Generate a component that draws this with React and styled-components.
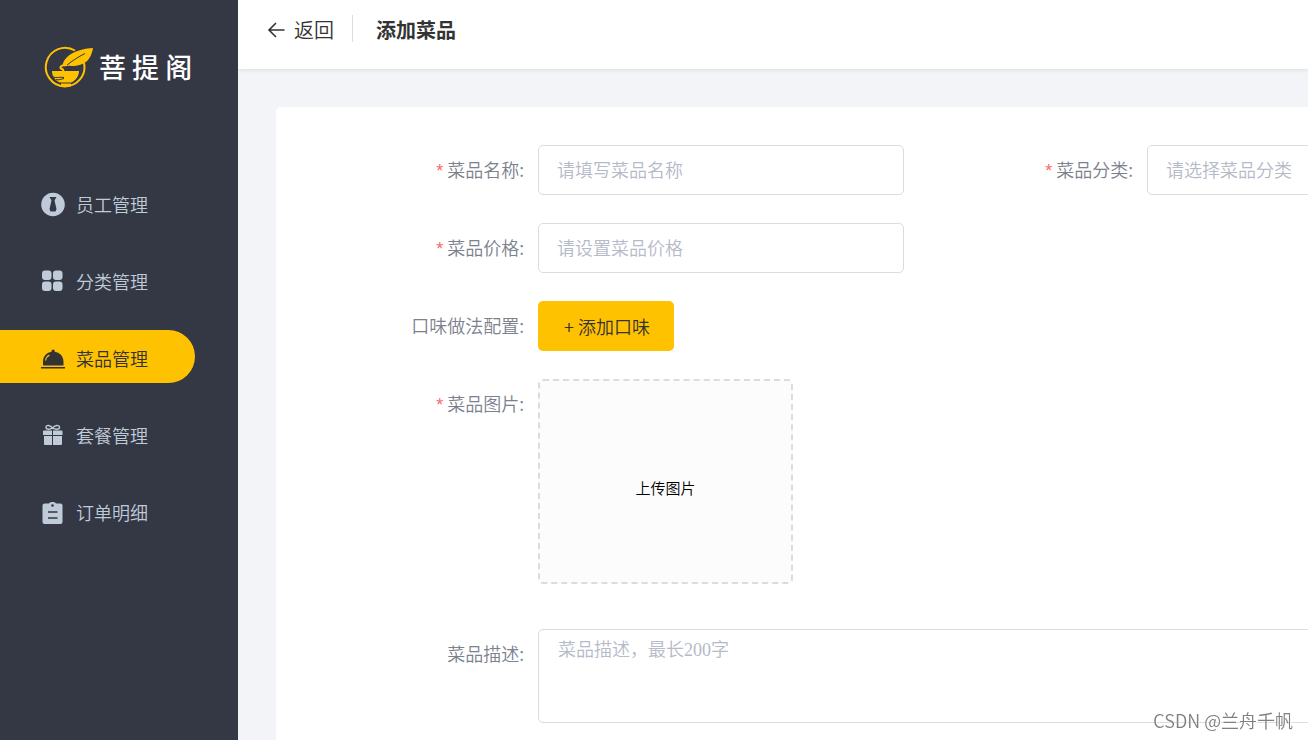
import React, { useState } from "react";
import styled, { createGlobalStyle } from "styled-components";

const GlobalStyle = createGlobalStyle`
  * {
    box-sizing: border-box;
  }

  body {
    margin: 0;
    overflow: hidden;
    background-color: #f3f4f7;
    font-family: "Noto Sans CJK SC", sans-serif;
    font-weight: 350;
  }

  button, input, select {
    font-family: inherit;
    font-weight: inherit;
  }
`;

const Layout = styled.div`
  display: flex;
  height: 100vh;
`;

// Sidebar
const Sidebar = styled.aside`
  flex: none;
  width: 238px;
  background-color: #343744;
`;

const Logo = styled.div`
  display: flex;
  align-items: center;
  gap: 5px;
  height: 42px;
  margin: 46px 0 88px 44px;
  color: #fff;
  font-size: 27px;
  font-weight: 500;
  line-height: 38px;
  white-space: nowrap;
`;

const Menu = styled.nav`
  display: flex;
  flex-direction: column;
  gap: 24px;
  padding-right: 43px;
`;

const MenuItem = styled.a`
  display: flex;
  align-items: center;
  gap: 11px;
  height: 53px;
  padding: 3px 0 0 40px;
  border-radius: 0 27px 27px 0;
  background-color: ${({ $active }) => ($active ? "#ffc200" : "transparent")};
  color: ${({ $active }) => ($active ? "#333" : "#bfcbd9")};
  font-size: 18px;
  line-height: 24px;
  text-decoration: none;
`;

// Header
const Main = styled.main`
  flex: 1;
  min-width: 0;
  overflow: hidden;
`;

const Header = styled.header`
  display: flex;
  align-items: center;
  height: 69px;
  padding: 15px 29px 27px;
  background-color: #fff;
  box-shadow: 0 1px 4px rgba(0, 21, 41, 0.1);
  color: #333;
  font-size: 20px;
`;

const BackButton = styled.button`
  display: flex;
  align-items: center;
  gap: 8px;
  height: 27px;
  padding: 2px 18px 0 0;
  border: none;
  border-right: 1px solid #d8dde3;
  background: none;
  color: #333;
  font-size: 20px;
  cursor: pointer;
`;

const Title = styled.h1`
  margin: 0 0 0 23px;
  padding-top: 2px;
  font-size: 20px;
  line-height: 27px;
  font-weight: 700;
`;

// Form
const Card = styled.section`
  min-width: 1275px;
  min-height: 100vh;
  margin: 38px;
  padding: 38px 38px 38px 37px;
  border-radius: 5px;
  background-color: #fff;
`;

const Form = styled.form`
  display: flex;
  flex-direction: column;
  gap: 28px;
`;

const Row = styled.div`
  display: flex;
  gap: 18px;
  padding-bottom: ${({ $last }) => ($last ? "17px" : "0")};
`;

const Field = styled.div`
  display: flex;
  flex: ${({ $wide }) => ($wide ? "1" : "none")};
`;

const Label = styled.label`
  width: 225px;
  padding-right: 14px;
  color: #7c818e;
  font-size: 18px;
  line-height: 48px;
  text-align: right;
`;

const Required = styled.span`
  margin-right: 4px;
  color: #f56c6c;
  font-family: "Liberation Sans", sans-serif;
  font-size: 18px;
`;

const Input = styled.input`
  width: 366px;
  height: 50px;
  padding: 0 19px 2px 18px;
  border: 1px solid #d8dde3;
  border-radius: 5px;
  background-color: #fff;
  color: #606266;
  font-size: 18px;
  outline: none;

  &::placeholder {
    color: #b4bac8;
  }
`;

const Select = styled.select`
  appearance: none;
  width: 366px;
  height: 50px;
  padding: 0 19px 2px 18px;
  border: 1px solid #d8dde3;
  border-radius: 5px;
  background-color: #fff;
  color: #b4bac8;
  font-size: 18px;
  outline: none;
`;

const AddButton = styled.button`
  height: 50px;
  padding: 0 24px 0 26px;
  border: none;
  border-radius: 5px;
  background-color: #ffc200;
  color: #333;
  font-size: 18px;
  cursor: pointer;
`;

const UploadButton = styled.button`
  width: 255px;
  height: 205px;
  padding: 12px 0 0;
  border: 2px dashed #d9dde2;
  border-radius: 5px;
  background-color: #fcfcfc;
  color: #000;
  font-size: 15px;
  cursor: pointer;
`;

const TextArea = styled.textarea`
  flex: 1;
  height: 94px;
  padding: 7px 19px;
  border: 1px solid #d8dde3;
  border-radius: 5px;
  color: #606266;
  font-family: "Liberation Serif", "Noto Sans CJK SC", serif;
  font-size: 18px;
  font-weight: 350;
  line-height: 26px;
  resize: none;
  outline: none;

  &::placeholder {
    color: #b4bac8;
  }
`;

const Watermark = styled.div`
  position: fixed;
  right: 15px;
  bottom: 8px;
  color: #808080;
  font-size: 18px;
  line-height: 24px;
  text-shadow: 1px 1px 0 #fff;
`;

const LogoIcon = () => (
  <svg width="50" height="42" viewBox="0 0 50 42" fill="none">
    <path d="M31 4.500A19.300 19.300 0 1 0 40 17" stroke="#ffc200" strokeWidth="2" />
    <path d="M49 2C47 13 42 20 27 20C24 19.500 22 20.500 18.500 20C20 9 33 3 49 2Z" fill="#ffc200" />
    <path d="M41 7.500C34 11 28 15 23 19" stroke="#343744" strokeWidth="1" />
    <path d="M23 19C16 19 15 22 18 23Q20 24 19 25.500" stroke="#ffc200" strokeWidth="2" />
    <path d="M8 25H35C35 30 32 34 27 37H17C12 35 8 31 8 25Z" fill="#ffc200" />
    <path d="M9 31C13 32.500 16 30.500 20 31.500M12 33.500C15 34.500 17 33 20 32.500" stroke="#343744" strokeWidth="1" />
    <path d="M16 37H28" stroke="#343744" strokeWidth="1" />
    <path d="M17 39H27" stroke="#ffc200" strokeWidth="3" />
  </svg>
);

const StaffIcon = () => (
  <svg width="25" height="25" viewBox="0 0 25 25">
    <circle cx="13" cy="12.500" r="11.800" fill="currentColor" />
    <path d="M9.500 5H16.500L14.500 8.500L16.500 17L15.500 19.500H10.500L9.500 17L11.500 8.500Z" fill="#343744" />
  </svg>
);

const CategoryIcon = () => (
  <svg width="25" height="25" viewBox="0 0 25 25" fill="currentColor">
    <rect x="2" y="1.500" width="9.500" height="9.500" rx="3" />
    <rect x="13" y="1.500" width="9.500" height="9.500" rx="3" />
    <rect x="2" y="12.500" width="9.500" height="9.500" rx="3" />
    <rect x="13" y="12.500" width="9.500" height="9.500" rx="3" />
  </svg>
);

const DishIcon = () => (
  <svg width="25" height="25" viewBox="0 0 25 25" fill="currentColor">
    <path d="M1 21H25V22.500H1Z" />
    <path d="M3 19.500V16C3 10 7 6.500 11.500 5.800V5A1.600 1.600 0 0 1 14.700 5V5.800C19.500 6.500 23.500 10 23.500 16V19.500Z" />
    <path d="M5.500 14.500C6 12 7.500 10 9.500 9" fill="none" stroke="#ffc200" strokeWidth="1.200" />
  </svg>
);

const GiftIcon = () => (
  <svg width="25" height="25" viewBox="0 0 25 25">
    <path
      d="M12.500 5C10.500 2 6 1.500 6 4.200C6 7 10.500 6.500 12.500 5C14.500 6.500 19.500 7 19.500 4.200C19.500 1.500 14.500 2 12.500 5Z"
      fill="none"
      stroke="currentColor"
      strokeWidth="1.400"
    />
    <path
      d="M4 7.500H12V12H3V8.500A1 1 0 0 1 4 7.500ZM13 7.500H21.500A1 1 0 0 1 22.500 8.500V12H13ZM4 13H12V22H5A1 1 0 0 1 4 21ZM13 13H22V21A1 1 0 0 1 21 22H13Z"
      fill="currentColor"
    />
  </svg>
);

const OrderIcon = () => (
  <svg width="25" height="25" viewBox="0 0 25 25">
    <path
      d="M4.500 3.500H9C9.500 1.500 15.500 1.500 16 3.500H20.500A2 2 0 0 1 22.500 5.500V22A2 2 0 0 1 20.500 24H4.500A2 2 0 0 1 2.500 22V5.500A2 2 0 0 1 4.500 3.500Z"
      fill="currentColor"
    />
    <circle cx="12.500" cy="5.500" r="1.300" fill="#343744" />
    <path d="M8 12H17.500M8 18H17.500" stroke="#343744" strokeWidth="1.500" />
  </svg>
);

const ArrowIcon = () => (
  <svg width="19" height="20" viewBox="0 0 19 20" fill="none" stroke="currentColor" strokeWidth="1.600">
    <path d="M17.500 10H2M9 3L2 10L9 17" />
  </svg>
);

const menuItems = [
  { id: "member", name: "员工管理", Icon: StaffIcon },
  { id: "category", name: "分类管理", Icon: CategoryIcon },
  { id: "food", name: "菜品管理", Icon: DishIcon },
  { id: "combo", name: "套餐管理", Icon: GiftIcon },
  { id: "order", name: "订单明细", Icon: OrderIcon },
];

const App = () => {
  const [active, setActive] = useState("food");

  return (
    <>
      <GlobalStyle />
      <Layout>
        <Sidebar>
          <Logo>
            <LogoIcon />
            <span>菩 提 阁</span>
          </Logo>
          <Menu>
            {menuItems.map(({ id, name, Icon }) => (
              <MenuItem key={id} href={`#${id}`} $active={id === active} onClick={() => setActive(id)}>
                <Icon />
                <span>{name}</span>
              </MenuItem>
            ))}
          </Menu>
        </Sidebar>

        <Main>
          <Header>
            <BackButton type="button">
              <ArrowIcon />
              返回
            </BackButton>
            <Title>添加菜品</Title>
          </Header>

          <Card>
            <Form>
              <Row>
                <Field>
                  <Label htmlFor="name"><Required>*</Required>菜品名称:</Label>
                  <Input id="name" placeholder="请填写菜品名称" />
                </Field>
                <Field>
                  <Label htmlFor="category"><Required>*</Required>菜品分类:</Label>
                  <Select id="category" defaultValue="">
                    <option value="">请选择菜品分类</option>
                  </Select>
                </Field>
              </Row>
              <Row>
                <Field>
                  <Label htmlFor="price"><Required>*</Required>菜品价格:</Label>
                  <Input id="price" placeholder="请设置菜品价格" />
                </Field>
              </Row>
              <Row>
                <Field>
                  <Label htmlFor="flavor">口味做法配置:</Label>
                  <AddButton id="flavor" type="button">+ 添加口味</AddButton>
                </Field>
              </Row>
              <Row $last>
                <Field>
                  <Label htmlFor="image"><Required>*</Required>菜品图片:</Label>
                  <UploadButton id="image" type="button">上传图片</UploadButton>
                </Field>
              </Row>
              <Row>
                <Field $wide>
                  <Label htmlFor="description">菜品描述:</Label>
                  <TextArea id="description" placeholder="菜品描述，最长200字" />
                </Field>
              </Row>
            </Form>
          </Card>
        </Main>
      </Layout>
      <Watermark>CSDN @兰舟千帆</Watermark>
    </>
  );
};

export default App;
